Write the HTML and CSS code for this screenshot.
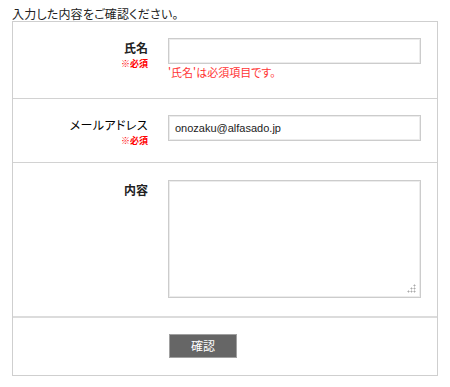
FILE: index.html
```html
<!DOCTYPE html>
<html lang="ja">
<head>
<meta charset="utf-8">
<title>確認</title>
<link rel="stylesheet" href="styles.css">
</head>
<body>
<p class="lead">入力した内容をご確認ください。</p>
<form class="form">
  <div class="row row-first">
    <div class="label">
      <span class="name">氏名</span>
      <span class="req">※必須</span>
    </div>
    <div class="field">
      <input class="input" type="text" value="">
      <p class="error">'氏名'は必須項目です。</p>
    </div>
  </div>
  <div class="row row-mail">
    <div class="label">
      <span class="name">メールアドレス</span>
      <span class="req">※必須</span>
    </div>
    <div class="field">
      <input class="input" type="text" value="onozaku@alfasado.jp">
    </div>
  </div>
  <div class="row row-body">
    <div class="label">
      <span class="name">内容</span>
    </div>
    <div class="field">
      <div class="textarea-wrap">
        <textarea class="textarea"></textarea>
        <span class="grip"></span>
      </div>
    </div>
  </div>
  <div class="row row-submit">
    <div class="label"></div>
    <div class="field">
      <button class="btn" type="button">確認</button>
    </div>
  </div>
</form>
</body>
</html>
```
FILE: styles.css
```css
html, body {
  margin: 0;
  background: #fff;
}
body {
  padding: 6px 13px 0 12px;
  font-family: "Noto Sans CJK JP", "Liberation Sans", sans-serif;
  color: #222;
  width: 426px;
}
.lead {
  margin: 0;
  font-size: 12px;
  line-height: 15px;
  font-feature-settings: "palt";
  letter-spacing: 0.2px;
}
.form {
  border: 1px solid #cfcfcf;
}
.row {
  display: grid;
  grid-template-columns: 135px 253px;
  column-gap: 20px;
  padding: 16px 0 19px;
  border-top: 1px solid #d2d2d2;
}
.row-first {
  border-top: none;
}
.row-mail {
  padding-bottom: 15px;
}
.row-body {
  padding-top: 17px;
  padding-bottom: 18px;
}
.row-submit {
  border-top: 2px solid #dcdcdc;
  padding: 16px 0 17px;
}
.label {
  display: flex;
  flex-direction: column;
  align-items: flex-end;
}
.name {
  font-size: 12px;
  line-height: 17px;
  font-weight: bold;
  color: #222;
  font-feature-settings: "palt";
  padding-top: 1px;
}
.row-mail .name {
  font-weight: normal;
  color: #000;
  letter-spacing: 0.4px;
}
.req {
  margin-top: 2px;
  font-size: 9px;
  line-height: 12px;
  font-weight: bold;
  color: #f00;
  font-feature-settings: "palt";
}
.field {
  display: flex;
  flex-direction: column;
  align-items: flex-start;
}
.input {
  box-sizing: border-box;
  width: 253px;
  height: 26px;
  margin: 0;
  padding: 0 6px;
  border: 1px solid #cccccc;
  box-shadow: inset 0 0 0 1px #ececec;
  font-family: "Liberation Sans", Arial, sans-serif;
  font-size: 11px;
  color: #222;
  outline: none;
}
.error {
  margin: 2px 0 0;
  font-size: 11px;
  line-height: 13px;
  color: #ff3333;
  font-feature-settings: "palt";
}
.textarea-wrap {
  position: relative;
  width: 253px;
  height: 118px;
}
.textarea {
  box-sizing: border-box;
  display: block;
  width: 253px;
  height: 118px;
  margin: 0;
  padding: 4px 6px;
  border: 1px solid #cccccc;
  box-shadow: inset 0 0 0 1px #ececec;
  font-family: "Liberation Sans", Arial, sans-serif;
  font-size: 11px;
  outline: none;
  resize: none;
}
.grip {
  position: absolute;
  right: 5px;
  bottom: 5px;
  width: 9px;
  height: 9px;
  background:
    radial-gradient(circle, #aaa 0.9px, transparent 1.1px) 6px 0 / 3px 3px no-repeat,
    radial-gradient(circle, #aaa 0.9px, transparent 1.1px) 3px 3px / 3px 3px no-repeat,
    radial-gradient(circle, #aaa 0.9px, transparent 1.1px) 6px 3px / 3px 3px no-repeat,
    radial-gradient(circle, #aaa 0.9px, transparent 1.1px) 0 6px / 3px 3px no-repeat,
    radial-gradient(circle, #aaa 0.9px, transparent 1.1px) 3px 6px / 3px 3px no-repeat,
    radial-gradient(circle, #aaa 0.9px, transparent 1.1px) 6px 6px / 3px 3px no-repeat;
}
.btn {
  box-sizing: border-box;
  width: 68px;
  height: 24px;
  margin: 0 0 0 1px;
  padding: 0;
  background: #666666;
  border: 1px solid #a0a0a0;
  color: #fff;
  font-family: "Noto Sans CJK JP", sans-serif;
  font-size: 12px;
  line-height: 22px;
  cursor: pointer;
}
```
